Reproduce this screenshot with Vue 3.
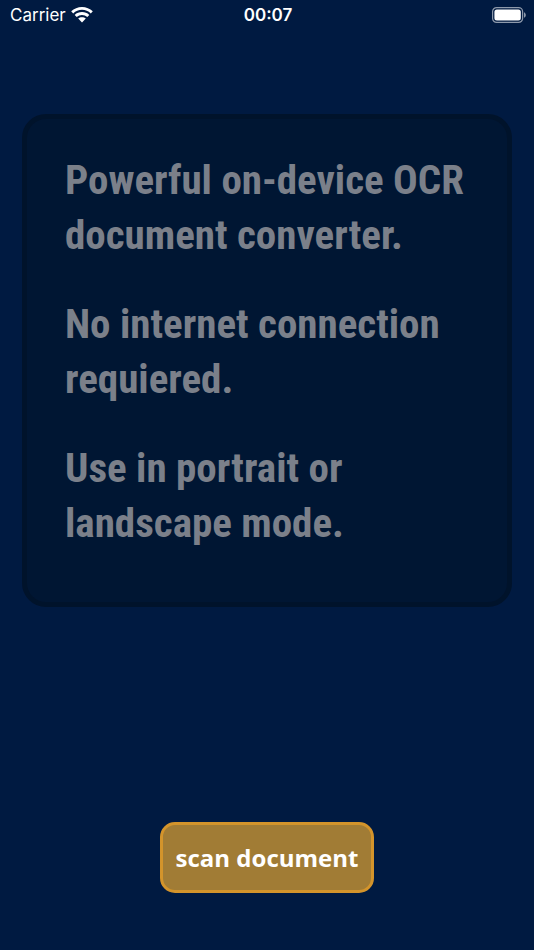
<script setup>
const paragraphs = [
  ['Powerful on-device OCR', 'document converter.'],
  ['No internet connection', 'requiered.'],
  ['Use in portrait or', 'landscape mode.'],
]
</script>

<template>
  <div class="screen">
    <header class="status">
      <div class="carrier">
        <span>Carrier</span>
        <svg width="22" height="16" viewBox="0 0 22 16" aria-hidden="true">
          <path d="M11 0C6.900 0 3 1.600 0.200 4.300L2.200 6.400A12.700 12.700 0 0 1 19.800 6.400L21.800 4.300C19 1.600 15.100 0 11 0Z" />
          <path d="M11 5.100C8.200 5.100 5.700 6.100 3.700 7.900L5.700 10A7.800 7.800 0 0 1 16.300 10L18.300 7.900C16.300 6.100 13.800 5.100 11 5.100Z" />
          <path d="M11 10.200C9.500 10.200 8.200 10.700 7.200 11.500L11 15.500L14.800 11.500C13.800 10.700 12.500 10.200 11 10.200Z" />
        </svg>
      </div>
      <time class="clock">00:07</time>
      <svg class="battery" width="34" height="16" viewBox="0 0 34 16" aria-hidden="true">
        <rect class="outline" x="0.600" y="0.600" width="30" height="14.800" rx="4" />
        <rect x="2.400" y="2.400" width="26.400" height="11.200" rx="2.500" />
        <path class="cap" d="M32 5.200C33.200 5.700 33.800 6.800 33.800 8S33.200 10.300 32 10.800Z" />
      </svg>
    </header>
    <main class="content">
      <section class="card">
        <p v-for="lines in paragraphs" :key="lines[0]">
          <span v-for="line in lines" :key="line">{{ line }}</span>
        </p>
      </section>
      <button type="button" class="scan">scan document</button>
    </main>
  </div>
</template>

<style>
body {
  margin: 0;
  background: #001a41;
}
</style>

<style scoped>
.screen {
  box-sizing: border-box;
  min-height: 100vh;
  display: flex;
  flex-direction: column;
  background: #001a41;
  color: #fff;
}
.status {
  display: grid;
  grid-template-columns: 1fr auto 1fr;
  align-items: center;
  height: 30px;
  padding: 0 8px 0 10px;
  font: 17px/30px Inter, sans-serif;
}
.carrier {
  display: flex;
  align-items: center;
  gap: 5px;
}
.clock {
  font-weight: 600;
}
.battery {
  justify-self: end;
}
svg {
  fill: #fff;
}
.outline {
  fill: none;
  stroke: #8d99ab;
  stroke-width: 1.2;
}
.cap {
  fill: #8d99ab;
}
.content {
  flex: 1;
  display: flex;
  flex-direction: column;
  align-items: center;
  justify-content: space-between;
  padding: 84px 22px 57px;
}
.card {
  box-sizing: border-box;
  width: 100%;
  padding: 34px 38px 51px;
  border: 5px solid #00132b;
  border-radius: 24px;
  background: #001633;
  color: #7b808a;
  font: bold 41px/55px "Roboto Condensed", "Liberation Sans", sans-serif;
}
.card p {
  margin: 0;
}
.card p + p {
  margin-top: 34px;
}
.card span {
  display: block;
}
.scan {
  box-sizing: border-box;
  height: 71px;
  padding: 0 13px;
  border: 3px solid #d3942b;
  border-radius: 15px;
  background: #a17c35;
  color: #fff;
  font: bold 24px/32px "Open Sans", sans-serif;
}
</style>
